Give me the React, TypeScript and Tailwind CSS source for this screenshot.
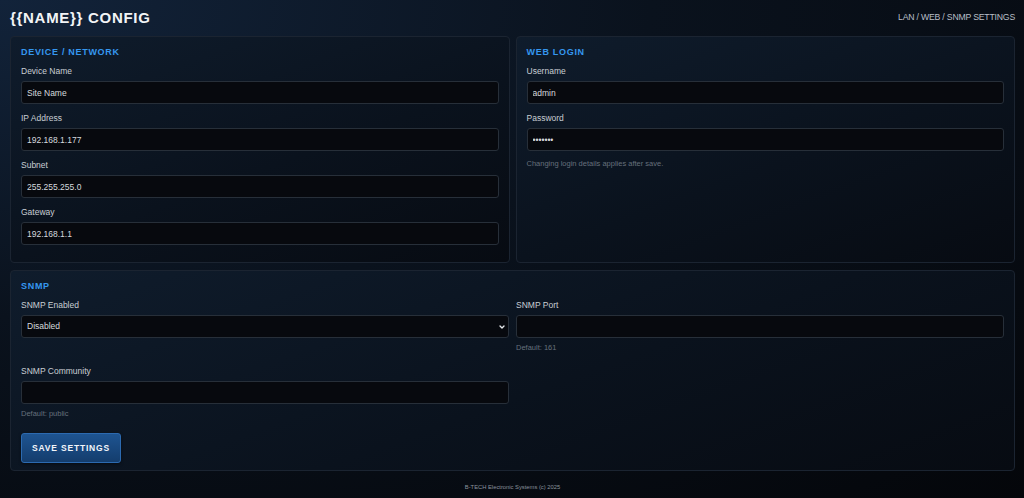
import { ChevronDown } from "lucide-react";

const font = { fontFamily: '"Liberation Sans", Arial, sans-serif' };

const inputCls =
  "block w-full h-[23px] rounded-[3px] border border-[#272f39] bg-[#07090e] px-[5px] text-[8.5px] text-[#d6dadf] outline-none";

function Card({ title, children, className = "" }: { title: string; children: React.ReactNode; className?: string }) {
  return (
    <section
      className={`rounded-[4px] border border-[#1b2431] bg-[linear-gradient(160deg,#0f1c2c_0%,#0a121d_55%,#070b12_100%)] px-[10px] pt-[9px] ${className}`}
    >
      <h2 className="mb-[7px] text-[9px] leading-[12px] font-bold tracking-[0.7px] text-[#3597f0]">{title}</h2>
      {children}
    </section>
  );
}

function Field({ label, value, type = "text", hint }: { label: string; value?: string; type?: string; hint?: string }) {
  return (
    <div>
      <label className="mb-[4px] block text-[8.5px] leading-[12px] text-[#c9ced4]">{label}</label>
      <input type={type} defaultValue={value} className={inputCls} />
      {hint && <p className="mt-[5px] text-[7.5px] leading-[9px] text-[#66707c]">{hint}</p>}
    </div>
  );
}

export default function App() {
  return (
    <div
      style={font}
      className="min-h-[498px] bg-[radial-gradient(ellipse_at_top_left,#12233a_0%,#0a121d_45%,#04060a_100%)] pl-[10px] pr-[9px] pb-[7px]"
    >
      {/* header */}
      <header className="flex h-[36px] items-center justify-between">
        <h1 className="text-[15px] font-bold tracking-[0.7px] text-[#f2f4f6]">{"{{NAME}} CONFIG"}</h1>
        <span className="text-[8.7px] tracking-[-0.2px] text-[#b9bfc7]">LAN / WEB / SNMP SETTINGS</span>
      </header>

      <div className="grid grid-cols-2 gap-[6px]">
        <Card title="DEVICE / NETWORK" className="pb-[17px]">
          <div className="flex flex-col gap-[8px]">
            <Field label="Device Name" value="Site Name" />
            <Field label="IP Address" value="192.168.1.177" />
            <Field label="Subnet" value="255.255.255.0" />
            <Field label="Gateway" value="192.168.1.1" />
          </div>
        </Card>

        <Card title="WEB LOGIN">
          <div className="flex flex-col gap-[8px]">
            <Field label="Username" value="admin" />
            <Field label="Password" value="1234567" type="password" />
          </div>
          <p className="mt-[8px] text-[7.5px] leading-[9px] text-[#66707c]">Changing login details applies after save.</p>
        </Card>
      </div>

      <Card title="SNMP" className="mt-[7px] pb-[7px]">
        <div className="grid grid-cols-2 gap-x-[7px] gap-y-[13px]">
          <div>
            <label className="mb-[4px] block text-[8.5px] leading-[12px] text-[#c9ced4]">SNMP Enabled</label>
            <div className="relative">
              <select defaultValue="0" className={`${inputCls} appearance-none`}>
                <option value="0">Disabled</option>
                <option value="1">Enabled</option>
              </select>
              <ChevronDown
                size={8}
                strokeWidth={4}
                className="pointer-events-none absolute right-[3px] top-[8px] text-[#e6e9ec]"
              />
            </div>
          </div>
          <Field label="SNMP Port" hint="Default: 161" />
          <Field label="SNMP Community" hint="Default: public" />
        </div>

        <button className="mt-[15px] h-[30px] w-[100px] rounded-[3px] border border-[#2c6ab0] bg-[linear-gradient(180deg,#1e5491_0%,#143d6d_100%)] text-[8.5px] font-bold tracking-[0.8px] text-[#f3f6fa] shadow-[0_1px_3px_rgba(0,0,0,0.5)]">
          SAVE SETTINGS
        </button>
      </Card>

      <footer className="mt-[12px] text-center text-[5.8px] leading-[8px] text-[#8b939d]">
        B-TECH Electronic Systems (c) 2025
      </footer>
    </div>
  );
}
